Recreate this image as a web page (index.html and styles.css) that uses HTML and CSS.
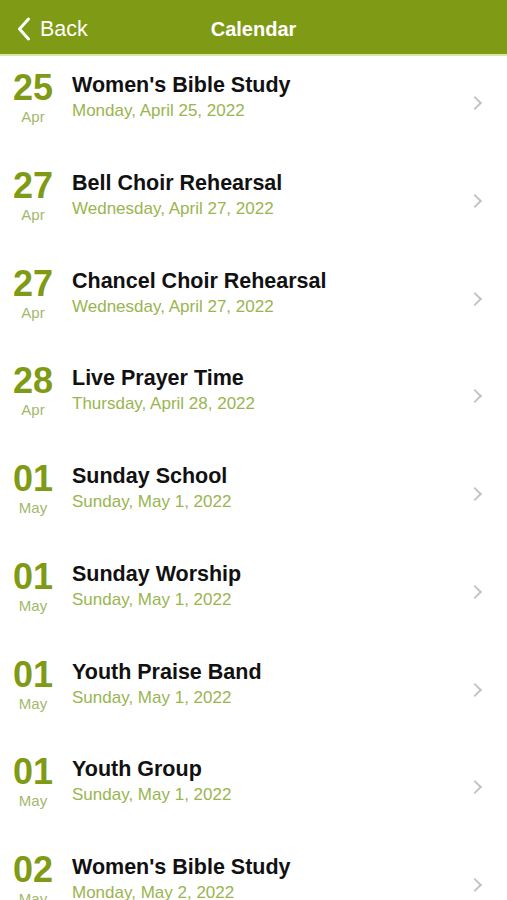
FILE: index.html
```html
<!DOCTYPE html>
<html lang="en">
<head>
    <meta charset="UTF-8">
    <meta name="viewport" content="width=device-width, initial-scale=1.0">
    <title>Calendar</title>
    <link rel="stylesheet" href="styles.css">
</head>
<body>
    <header class="nav-bar">
        <a class="back" href="#">
            <svg class="back-icon" width="14" height="24" viewBox="0 0 14 24"><path d="M11.5 2 L2.5 12 L11.5 22" fill="none" stroke="#fff" stroke-width="3" stroke-linecap="round" stroke-linejoin="round"/></svg>
            <span>Back</span>
        </a>
        <h1 class="nav-title">Calendar</h1>
    </header>

    <ul class="events">
        <li class="event">
            <div class="date"><span class="day">25</span><span class="month">Apr</span></div>
            <div class="info"><div class="title">Women's Bible Study</div><div class="when">Monday, April 25, 2022</div></div>
            <span class="chevron"></span>
        </li>
        <li class="event">
            <div class="date"><span class="day">27</span><span class="month">Apr</span></div>
            <div class="info"><div class="title">Bell Choir Rehearsal</div><div class="when">Wednesday, April 27, 2022</div></div>
            <span class="chevron"></span>
        </li>
        <li class="event">
            <div class="date"><span class="day">27</span><span class="month">Apr</span></div>
            <div class="info"><div class="title">Chancel Choir Rehearsal</div><div class="when">Wednesday, April 27, 2022</div></div>
            <span class="chevron"></span>
        </li>
        <li class="event">
            <div class="date"><span class="day">28</span><span class="month">Apr</span></div>
            <div class="info"><div class="title">Live Prayer Time</div><div class="when">Thursday, April 28, 2022</div></div>
            <span class="chevron"></span>
        </li>
        <li class="event">
            <div class="date"><span class="day">01</span><span class="month">May</span></div>
            <div class="info"><div class="title">Sunday School</div><div class="when">Sunday, May 1, 2022</div></div>
            <span class="chevron"></span>
        </li>
        <li class="event">
            <div class="date"><span class="day">01</span><span class="month">May</span></div>
            <div class="info"><div class="title">Sunday Worship</div><div class="when">Sunday, May 1, 2022</div></div>
            <span class="chevron"></span>
        </li>
        <li class="event">
            <div class="date"><span class="day">01</span><span class="month">May</span></div>
            <div class="info"><div class="title">Youth Praise Band</div><div class="when">Sunday, May 1, 2022</div></div>
            <span class="chevron"></span>
        </li>
        <li class="event">
            <div class="date"><span class="day">01</span><span class="month">May</span></div>
            <div class="info"><div class="title">Youth Group</div><div class="when">Sunday, May 1, 2022</div></div>
            <span class="chevron"></span>
        </li>
        <li class="event">
            <div class="date"><span class="day">02</span><span class="month">May</span></div>
            <div class="info"><div class="title">Women's Bible Study</div><div class="when">Monday, May 2, 2022</div></div>
            <span class="chevron"></span>
        </li>
    </ul>
</body>
</html>
```

FILE: styles.css
```css
body {
    margin: 0;
    font-family: "Liberation Sans", Arial, sans-serif;
    background-color: #fff;
    overflow: hidden;
}
.nav-bar {
    position: relative;
    height: 56px;
    box-sizing: border-box;
    padding-top: 4px;
    background-color: #7f9a14;
    border-bottom: 2px solid #d9e8a8;
    display: flex;
    align-items: center;
    justify-content: center;
}
.back {
    position: absolute;
    left: 17px;
    top: 4px;
    bottom: 0;
    display: flex;
    align-items: center;
    gap: 9px;
    color: #fff;
    text-decoration: none;
    font-size: 21.5px;
}
.nav-title {
    margin: 0;
    color: #fff;
    font-size: 20px;
    font-weight: bold;
}
.events {
    list-style: none;
    margin: 0;
    padding: 0;
}
.event {
    height: 97.75px;
    box-sizing: border-box;
    display: flex;
    align-items: flex-start;
    padding-top: 16px;
}
.date {
    width: 66px;
    display: flex;
    flex-direction: column;
    align-items: center;
}
.day {
    color: #7f9a14;
    font-size: 36px;
    font-weight: bold;
    line-height: 32px;
}
.month {
    margin-top: 4px;
    color: #a3b86c;
    font-size: 15px;
    line-height: 18px;
}
.info {
    flex: 1;
    padding-left: 6px;
}
.title {
    color: #111;
    font-size: 21.5px;
    font-weight: bold;
    line-height: 26px;
}
.when {
    color: #9ab550;
    font-size: 17px;
    line-height: 26px;
}
.chevron {
    width: 8px;
    height: 8px;
    border-right: 2px solid #c4c4c4;
    border-top: 2px solid #c4c4c4;
    transform: rotate(45deg);
    margin: 26px 27px 0 0;
}
```
